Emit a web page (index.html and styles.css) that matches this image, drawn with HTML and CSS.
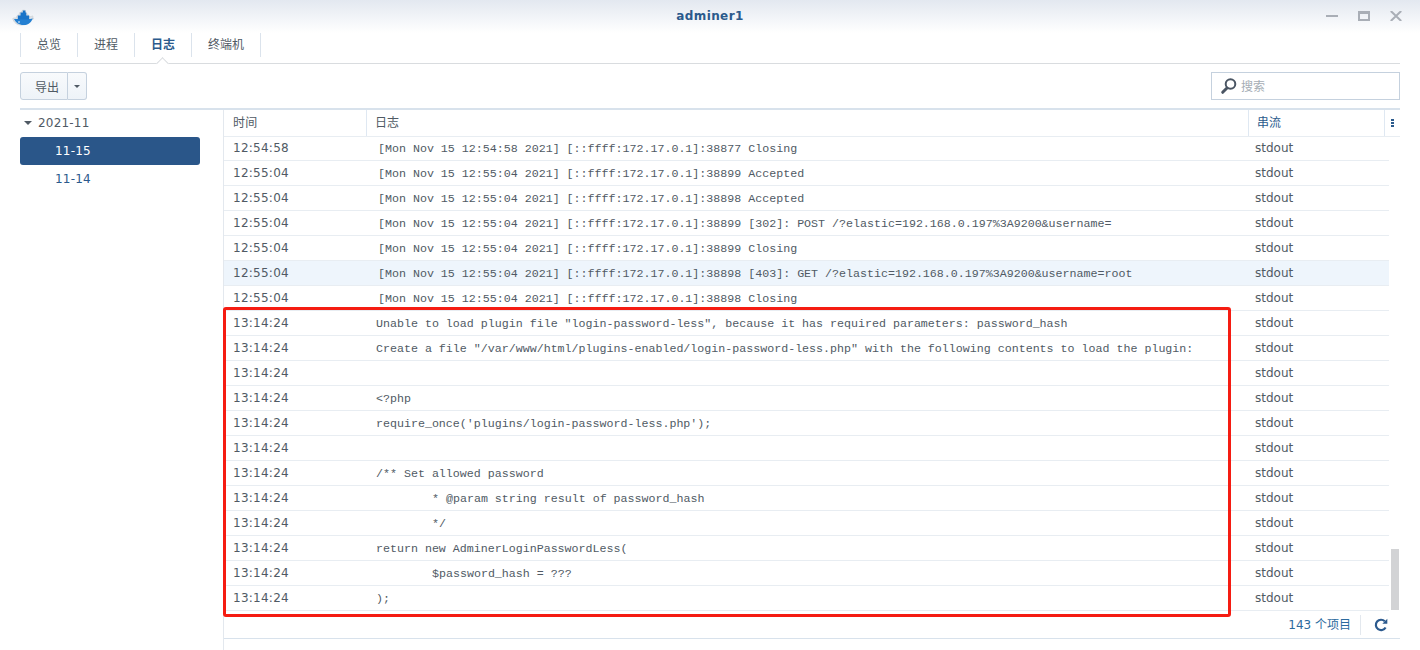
FILE: index.html
```html
<!DOCTYPE html>
<html lang="zh">
<head>
<meta charset="utf-8">
<title>adminer1</title>
<link rel="stylesheet" href="styles.css">
</head>
<body>
<div class="window">
  <header class="titlebar">
    <svg class="logo" width="24" height="18" viewBox="0 0 24 18">
      <path d="M.8 9.500c1.200-.6 2.600-.6 3.400-.3.200-1.200.5-2.500 1.500-3 .6-.4 1-.3 1.500-.3l.2-2.200 2-.6 1.200-2 2.800.3.400 3.100 2.200.8.800 2.400c1.200.4 2.800-.4 3.800-.8.500.8.400 1.400-.1 2 .6.100 1.200.3 1.300.6-.8 1-2 1.100-3.100 1-1.400 3.400-4.500 5.600-8.800 5.600-4.800 0-8-2.200-9.100-6.600z" fill="#dfe3e8" stroke="#c4c9cf" stroke-width=".6"/>
      <path d="M2 10h16c1 0 2-.4 2.600-.8-.5 3-3.500 6.800-9 6.800C7 16 3.800 13.800 2 10z" fill="#2480d2"/>
      <path d="M5.800 6.500h11.400v4H5.800zM8.500 3.500h5.800v3.500H8.500zM10.800 1.500h2.600v2.500h-2.600z" fill="#1873c8"/>
      <circle cx="7" cy="13" r=".8" fill="#fff"/>
    </svg>
    <h1 class="title">adminer1</h1>
    <div class="winctl">
      <svg width="12" height="10" viewBox="0 0 12 10"><path d="M0 5h12" stroke="#a9aeb6" stroke-width="2"/></svg>
      <svg width="12" height="10" viewBox="0 0 12 10"><path d="M1 1h10v8H1z" fill="none" stroke="#a9aeb6" stroke-width="2"/><path d="M0 2h12" stroke="#a9aeb6" stroke-width="2"/></svg>
      <svg width="12" height="10" viewBox="0 0 12 10"><path d="M.8 0l10.400 10M11.200 0L.8 10" stroke="#a9aeb6" stroke-width="2"/></svg>
    </div>
  </header>

  <nav class="tabs">
    <span class="tab">总览</span>
    <span class="tab">进程</span>
    <span class="tab active">日志</span>
    <span class="tab">终端机</span>
  </nav>

  <div class="toolbar">
    <div class="btn-group">
      <button class="btn">导出</button>
      <button class="btn caret-btn"><span class="caret"></span></button>
    </div>
    <div class="search">
      <svg width="18" height="18" viewBox="0 0 18 18"><circle cx="10.500" cy="7" r="4.800" fill="none" stroke="#4a5563" stroke-width="2"/><path d="M7 11l-4.300 4.300" stroke="#4a5563" stroke-width="3" stroke-linecap="round"/></svg>
      <span class="search-text">搜索</span>
    </div>
  </div>

  <div class="content">
    <aside class="sidebar">
      <div class="tree-group"><span class="tree-caret"></span>2021-11</div>
      <div class="tree-item selected">11-15</div>
      <div class="tree-item">11-14</div>
    </aside>

    <main class="logs">
      <div class="grid-wrap">
        <div class="grid">
          <div class="row head">
            <div class="c-time">时间</div>
            <div class="c-log">日志</div>
            <div class="c-stream">串流</div>
            <div class="c-menu"><i></i><i></i><i></i></div>
          </div>
          <div class="row"><div class="c-time">12:54:58</div><div class="c-log sh">[Mon Nov 15 12:54:58 2021] [::ffff:172.17.0.1]:38877 Closing</div><div class="c-stream">stdout</div></div>
          <div class="row"><div class="c-time">12:55:04</div><div class="c-log sh">[Mon Nov 15 12:55:04 2021] [::ffff:172.17.0.1]:38899 Accepted</div><div class="c-stream">stdout</div></div>
          <div class="row"><div class="c-time">12:55:04</div><div class="c-log sh">[Mon Nov 15 12:55:04 2021] [::ffff:172.17.0.1]:38898 Accepted</div><div class="c-stream">stdout</div></div>
          <div class="row"><div class="c-time">12:55:04</div><div class="c-log sh">[Mon Nov 15 12:55:04 2021] [::ffff:172.17.0.1]:38899 [302]: POST /?elastic=192.168.0.197%3A9200&amp;username=</div><div class="c-stream">stdout</div></div>
          <div class="row"><div class="c-time">12:55:04</div><div class="c-log sh">[Mon Nov 15 12:55:04 2021] [::ffff:172.17.0.1]:38899 Closing</div><div class="c-stream">stdout</div></div>
          <div class="row hover"><div class="c-time">12:55:04</div><div class="c-log sh">[Mon Nov 15 12:55:04 2021] [::ffff:172.17.0.1]:38898 [403]: GET /?elastic=192.168.0.197%3A9200&amp;username=root</div><div class="c-stream">stdout</div></div>
          <div class="row"><div class="c-time">12:55:04</div><div class="c-log sh">[Mon Nov 15 12:55:04 2021] [::ffff:172.17.0.1]:38898 Closing</div><div class="c-stream">stdout</div></div>
          <div class="row"><div class="c-time">13:14:24</div><div class="c-log">Unable to load plugin file "login-password-less", because it has required parameters: password_hash</div><div class="c-stream">stdout</div></div>
          <div class="row"><div class="c-time">13:14:24</div><div class="c-log">Create a file "/var/www/html/plugins-enabled/login-password-less.php" with the following contents to load the plugin:</div><div class="c-stream">stdout</div></div>
          <div class="row"><div class="c-time">13:14:24</div><div class="c-log"></div><div class="c-stream">stdout</div></div>
          <div class="row"><div class="c-time">13:14:24</div><div class="c-log">&lt;?php</div><div class="c-stream">stdout</div></div>
          <div class="row"><div class="c-time">13:14:24</div><div class="c-log">require_once('plugins/login-password-less.php');</div><div class="c-stream">stdout</div></div>
          <div class="row"><div class="c-time">13:14:24</div><div class="c-log"></div><div class="c-stream">stdout</div></div>
          <div class="row"><div class="c-time">13:14:24</div><div class="c-log">/** Set allowed password</div><div class="c-stream">stdout</div></div>
          <div class="row"><div class="c-time">13:14:24</div><div class="c-log in">* @param string result of password_hash</div><div class="c-stream">stdout</div></div>
          <div class="row"><div class="c-time">13:14:24</div><div class="c-log in">*/</div><div class="c-stream">stdout</div></div>
          <div class="row"><div class="c-time">13:14:24</div><div class="c-log">return new AdminerLoginPasswordLess(</div><div class="c-stream">stdout</div></div>
          <div class="row"><div class="c-time">13:14:24</div><div class="c-log in">$password_hash = ???</div><div class="c-stream">stdout</div></div>
          <div class="row"><div class="c-time">13:14:24</div><div class="c-log">);</div><div class="c-stream">stdout</div></div>
        </div>
        <div class="scrollbar"><div class="thumb"></div></div>
        <div class="highlight"></div>
      </div>
      <footer class="foot">
        <span class="count">143 个项目</span>
        <span class="foot-sep"></span>
        <svg width="14" height="14" viewBox="0 0 14 14"><path d="M11.600 9.500A5.200 5.200 0 1 1 10.800 3.300" fill="none" stroke="#2c5a8e" stroke-width="2.200"/><path d="M8.300 5.800h5V.8z" fill="#2c5a8e"/></svg>
      </footer>
    </main>
  </div>
</div>
</body>
</html>
```
FILE: styles.css
```css
* { box-sizing: border-box; }
html, body { margin: 0; padding: 0; }
body {
  width: 1420px;
  height: 650px;
  overflow: hidden;
  background: #fff;
  color: #505a64;
  font: 12px/1 "DejaVu Sans", "Noto Sans CJK SC", sans-serif;
}
.window { height: 650px; display: flex; flex-direction: column; }

.titlebar {
  flex: none;
  height: 33px;
  display: flex;
  align-items: center;
  justify-content: space-between;
  position: relative;
  padding: 0 18px 2px 12px;
  background: linear-gradient(#e3e8f0, #ffffff);
}
.logo { flex: none; margin-top: 4px; }
.title {
  position: absolute;
  left: 0;
  right: 0;
  top: 9px;
  margin: 0;
  text-align: center;
  font: bold 12px/14px "DejaVu Sans", sans-serif;
  letter-spacing: .4px;
  color: #2b5a8c;
}
.winctl { display: flex; gap: 20px; }
.winctl svg { display: block; }

.tabs {
  flex: none;
  height: 31px;
  margin: 0 20px;
  display: flex;
  align-items: flex-start;
  border-bottom: 1px solid #d9dcdf;
  position: relative;
}
.tab {
  height: 24px;
  padding: 0 16px;
  border-right: 1px solid #dbe3ec;
  font-size: 12px;
  line-height: 24px;
  color: #505a64;
}
.tab:first-child { border-left: 1px solid #dbe3ec; }
.tab.active { color: #2b5a8c; position: relative; font-weight: bold; }
.tab.active::after {
  content: "";
  position: absolute;
  left: 23px;
  top: 26px;
  width: 8px;
  height: 8px;
  background: #fff;
  border-left: 1px solid #d9dcdf;
  border-top: 1px solid #d9dcdf;
  transform: rotate(45deg);
}

.toolbar {
  flex: none;
  height: 44px;
  margin: 0 20px;
  padding-top: 8px;
  display: flex;
  justify-content: space-between;
  align-items: flex-start;
}
.btn-group { display: flex; height: 28px; }
.btn {
  height: 28px;
  width: 48px;
  padding: 0 0 0 6px;
  border: 1px solid #c5d1de;
  border-radius: 3px 0 0 3px;
  background: linear-gradient(#f8fafc, #eef3f8);
  font: 12px "DejaVu Sans", "Noto Sans CJK SC", sans-serif;
  color: #505a64;
}
.caret-btn {
  width: 19px;
  padding: 0;
  border-left: 0;
  border-radius: 0 3px 3px 0;
  display: flex;
  align-items: center;
  justify-content: center;
}
.caret {
  width: 0;
  height: 0;
  border: 3px solid transparent;
  border-top: 3px solid #505a64;
  border-bottom: 0;
}
.search {
  width: 189px;
  height: 28px;
  display: flex;
  align-items: center;
  gap: 3px;
  padding-left: 8px;
  border: 1px solid #c5d1de;
  color: #a5adb5;
}
.search svg { display: block; }
.search-text { padding-top: 2px; }

.content { flex: 1; min-height: 0; display: flex; margin: 0 20px; border-top: 2px solid #d8e2ec; }
.sidebar { flex: none; width: 180px; }
.tree-group {
  height: 27px;
  display: flex;
  align-items: center;
  padding: 0 0 1px 4px;
  font-size: 12px;
  letter-spacing: .2px;
}
.tree-caret {
  width: 0;
  height: 0;
  margin-right: 6px;
  border: 4px solid transparent;
  border-top: 4px solid #505a64;
  border-bottom: 0;
}
.tree-item {
  height: 28px;
  line-height: 28px;
  padding-left: 35px;
  font-size: 12px;
  letter-spacing: .2px;
  color: #2b5a8c;
  border-radius: 3px;
}
.tree-item.selected { background: #2a5689; color: #fff; line-height: 29px; }

.logs {
  flex: none;
  width: 1177px;
  margin-left: 23px;
  border-left: 1px solid #e3e8ee;
  display: flex;
  flex-direction: column;
  min-height: 0;
}
.grid-wrap { position: relative; flex: none; height: 501px; }
.grid { width: 1165px; }
.row { display: flex; height: 25px; border-bottom: 1px solid #e8edf2; align-items: center; }
.row.head { width: 1176px; height: 27px; }
.head + .row { height: 24px; }
.row.hover { background: #eef5fc; }
.c-time { flex: none; width: 143px; padding: 0 0 1px 9px; font-size: 12px; letter-spacing: .25px; }
.c-log {
  flex: none;
  width: 881px;
  padding-left: 9px;
  white-space: pre;
  overflow: hidden;
  font: 11.65px "Liberation Mono", "Noto Sans CJK SC", monospace;
  color: #505a64;
}
.c-log.sh { padding-left: 11px; }
.c-log.in { padding-left: 65px; }
.c-stream { flex: none; width: 141px; padding: 0 0 1px 7px; font-size: 12px; }
.head > div { height: 100%; padding-bottom: 0; font: 12px/26px "DejaVu Sans", "Noto Sans CJK SC", sans-serif; }
.head .c-time { width: 142px; }
.head .c-log { width: 882px; padding-left: 8px; border-left: 1px solid #dfe8f2; }
.head .c-stream { width: 136px; padding-left: 8px; color: #2b5a8c; border-left: 1px solid #dfe8f2; }
.head .c-menu {
  flex: none;
  width: 16px;
  border-left: 1px solid #dfe8f2;
  position: relative;
}
.c-menu i {
  position: absolute;
  left: 6px;
  width: 3px;
  height: 2px;
  background: #2b5a8c;
}
.c-menu i:nth-child(1) { top: 9px; }
.c-menu i:nth-child(2) { top: 12px; }
.c-menu i:nth-child(3) { top: 15px; }

.scrollbar { position: absolute; right: 1px; top: 26px; bottom: 0; width: 8px; }
.thumb { height: 61px; position: absolute; left: 0; right: 0; bottom: 1px; background: #d2d3d5; }
.highlight {
  position: absolute;
  left: -1px;
  top: 197px;
  width: 1008px;
  height: 310px;
  border: 3px solid #f51c12;
  border-radius: 3px;
}

.foot {
  flex: none;
  height: 28px;
  display: flex;
  align-items: center;
  justify-content: flex-end;
  padding-right: 12px;
  border-bottom: 1px solid #d8e2ec;
  width: 1176px;
}
.count { font-size: 12px; color: #2b6a9e; }
.foot-sep { width: 1px; height: 20px; background: #e3e8ee; margin: 0 13px 0 9px; }
.foot svg { display: block; }
```
